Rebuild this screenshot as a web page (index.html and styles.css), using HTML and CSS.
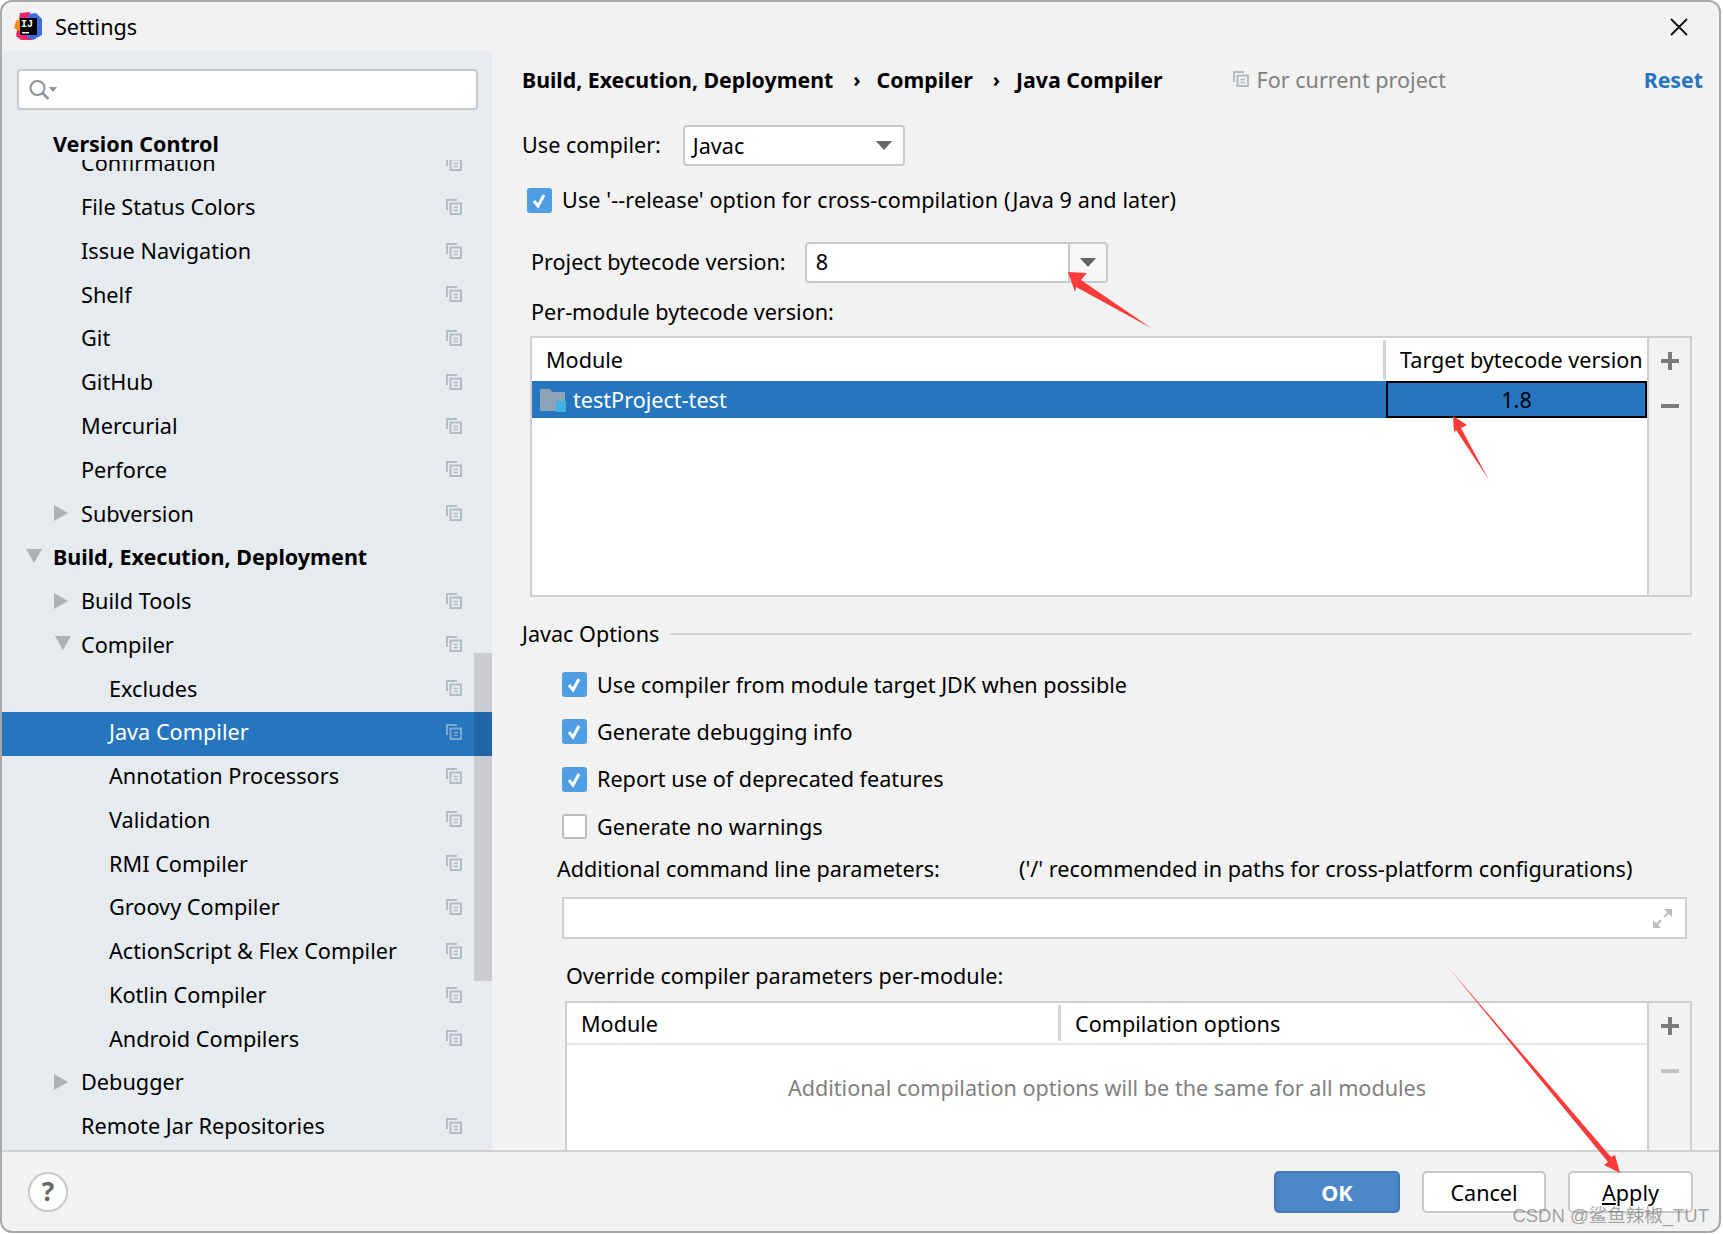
FILE: index.html
```html
<!DOCTYPE html>
<html>
	<head>
		<meta charset="UTF-8">
		<title>Settings</title>
		<link rel="stylesheet" href="styles.css">
	</head>
	<body>
		<svg class="defs" width="0" height="0">
			<symbol id="copy" viewBox="0 0 16 16">
				<path d="M1 11V1h10" fill="none" stroke="currentColor" stroke-width="2"/>
				<rect x="4.5" y="4.5" width="10.5" height="10.5" fill="none" stroke="currentColor" stroke-width="2"/>
				<path d="M7.5 8.5h4.500M7.500 11.500h4.500" stroke="currentColor" stroke-width="1.500"/>
			</symbol>
			<symbol id="check" viewBox="0 0 25 25">
				<rect width="25" height="25" rx="3" fill="#4f9ee3"/>
				<path d="M7 13l4 5 6-11" fill="none" stroke="#fff" stroke-width="3"/>
			</symbol>
		</svg>
		<div class="window">
			<div class="titlebar">
				<svg class="logo" width="29" height="29" viewBox="0 0 29 29">
					<path d="M6 1l10-1 2 28-11 0-5-4z" fill="#e8256f"/>
					<path d="M15 2l7-1 6 6v16l-9 5-6-3z" fill="#3b6fe0"/>
					<path d="M2 9l5-3 1 15-8-5z" fill="#f98a1f"/>
					<rect x="6" y="6" width="17" height="17" fill="#000"/>
					<text x="7" y="15" class="logo-text">IJ</text>
					<rect x="8" y="20" width="7" height="1.500" fill="#fff"/>
				</svg>
				<span class="title">Settings</span>
				<svg class="close" width="18" height="18" viewBox="0 0 18 18">
					<path d="M1 1l16 16M17 1L1 17" stroke="#111" stroke-width="1.800"/>
				</svg>
			</div>
			<div class="content">
				<div class="sidebar">
					<div class="search">
						<svg width="30" height="24" viewBox="0 0 30 24">
							<circle cx="9.500" cy="10" r="7" fill="none" stroke="#8e9499" stroke-width="2"/>
							<path d="M14.500 15l6 6" stroke="#8e9499" stroke-width="2.500"/>
							<path d="M21 9h8l-4 5z" fill="#8e9499"/>
						</svg>
					</div>
					<div class="tree-head">Version Control</div>
					<div class="tree">
						<div class="row lvl2 first">Confirmation<svg class="copy"><use href="#copy"/></svg></div>
						<div class="row lvl2">File Status Colors<svg class="copy"><use href="#copy"/></svg></div>
						<div class="row lvl2">Issue Navigation<svg class="copy"><use href="#copy"/></svg></div>
						<div class="row lvl2">Shelf<svg class="copy"><use href="#copy"/></svg></div>
						<div class="row lvl2">Git<svg class="copy"><use href="#copy"/></svg></div>
						<div class="row lvl2">GitHub<svg class="copy"><use href="#copy"/></svg></div>
						<div class="row lvl2">Mercurial<svg class="copy"><use href="#copy"/></svg></div>
						<div class="row lvl2">Perforce<svg class="copy"><use href="#copy"/></svg></div>
						<div class="row lvl2"><i class="tri tri-right"></i>Subversion<svg class="copy"><use href="#copy"/></svg></div>
						<div class="row lvl1 bold"><i class="tri tri-down"></i>Build, Execution, Deployment</div>
						<div class="row lvl2"><i class="tri tri-right"></i>Build Tools<svg class="copy"><use href="#copy"/></svg></div>
						<div class="row lvl2"><i class="tri tri-down"></i>Compiler<svg class="copy"><use href="#copy"/></svg></div>
						<div class="row lvl3">Excludes<svg class="copy"><use href="#copy"/></svg></div>
						<div class="row lvl3 selected">Java Compiler<svg class="copy"><use href="#copy"/></svg></div>
						<div class="row lvl3">Annotation Processors<svg class="copy"><use href="#copy"/></svg></div>
						<div class="row lvl3">Validation<svg class="copy"><use href="#copy"/></svg></div>
						<div class="row lvl3">RMI Compiler<svg class="copy"><use href="#copy"/></svg></div>
						<div class="row lvl3">Groovy Compiler<svg class="copy"><use href="#copy"/></svg></div>
						<div class="row lvl3">ActionScript &amp; Flex Compiler<svg class="copy"><use href="#copy"/></svg></div>
						<div class="row lvl3">Kotlin Compiler<svg class="copy"><use href="#copy"/></svg></div>
						<div class="row lvl3">Android Compilers<svg class="copy"><use href="#copy"/></svg></div>
						<div class="row lvl2"><i class="tri tri-right"></i>Debugger</div>
						<div class="row lvl2">Remote Jar Repositories<svg class="copy"><use href="#copy"/></svg></div>
					</div>
					<div class="scrollbar"></div>
				</div>
				<div class="main">
					<div class="crumbs">
						<b>Build, Execution, Deployment</b><span class="sep">›</span>
						<b>Compiler</b><span class="sep">›</span>
						<b>Java Compiler</b>
						<span class="scope"><svg class="copy"><use href="#copy"/></svg>For current project</span>
						<b class="reset">Reset</b>
					</div>
					<div class="compiler-row">
						<span class="label">Use compiler:</span>
						<div class="combo combo-compiler"><span class="value">Javac</span><i class="caret"></i></div>
					</div>
					<div class="check-row release">
						<svg class="check"><use href="#check"/></svg>Use '--release' option for cross-compilation (Java 9 and later)
					</div>
					<div class="bytecode-row">
						<span class="label">Project bytecode version:</span>
						<div class="combo combo-bytecode">
							<span class="value">8</span>
							<span class="combo-btn"><i class="caret"></i></span>
						</div>
					</div>
					<div class="per-module">Per-module bytecode version:</div>
					<div class="table table-top">
						<div class="table-body">
							<div class="thead">
								<div class="th th-module">Module</div>
								<div class="th">Target bytecode version</div>
							</div>
							<div class="tr">
								<div class="td-module">
									<svg width="26" height="25" viewBox="0 0 26 25">
										<path d="M0 2h10l2 3h13v19H0z" fill="#8fa3b8"/>
										<rect x="16" y="14" width="10" height="11" fill="#3fb1e3"/>
									</svg>
									testProject-test
								</div>
								<div class="td-target">1.8</div>
							</div>
						</div>
						<div class="tools">
							<span class="plus"></span>
							<span class="minus"></span>
						</div>
					</div>
					<div class="group-head"><span>Javac Options</span><i></i></div>
					<div class="options">
						<div class="check-row"><svg class="check"><use href="#check"/></svg>Use compiler from module target JDK when possible</div>
						<div class="check-row"><svg class="check"><use href="#check"/></svg>Generate debugging info</div>
						<div class="check-row"><svg class="check"><use href="#check"/></svg>Report use of deprecated features</div>
						<div class="check-row"><span class="check empty"></span>Generate no warnings</div>
					</div>
					<div class="params">
						<span class="params-label">Additional command line parameters:</span>
						<span>('/' recommended in paths for cross-platform configurations)</span>
					</div>
					<div class="field">
						<svg width="23" height="23" viewBox="0 0 23 23">
							<path d="M13 2h8v8zM10 21H2v-8z" fill="#b9bec3"/>
							<path d="M18 5l-5 5M5 18l5-5" stroke="#b9bec3" stroke-width="2"/>
						</svg>
					</div>
					<div class="override">Override compiler parameters per-module:</div>
					<div class="table table-bottom">
						<div class="table-body">
							<div class="thead thead-light">
								<div class="th th-module2">Module</div>
								<div class="th">Compilation options</div>
							</div>
							<div class="empty-text">Additional compilation options will be the same for all modules</div>
						</div>
						<div class="tools">
							<span class="plus"></span>
							<span class="minus off"></span>
						</div>
					</div>
				</div>
			</div>
			<div class="footer">
				<span class="help">?</span>
				<div class="btn btn-ok">OK</div>
				<div class="btn btn-cancel">Cancel</div>
				<div class="btn"><u>A</u>pply</div>
			</div>
			<svg class="marks" width="1723" height="1234" viewBox="0 0 1723 1234">
				<path d="M1068 272l19 1-6 7 70 48-75-41-1 5z"/>
				<path d="M1453 416l14 9-6 3 28 52-33-50-2 3z"/>
				<path d="M1448 967l163 190 4-2 5 18-16-8 4-3z"/>
			</svg>
			<div class="watermark">CSDN @鲨鱼辣椒_TUT</div>
		</div>
	</body>
</html>
```

FILE: styles.css
```css
*{margin:0;padding:0;box-sizing:border-box;}
html{height:100%;}
body{
	height:100%;
	background:#fff;
	font-family:"Noto Sans","Noto Sans CJK SC",sans-serif;
	font-size:21.6px;
	color:#000;
	overflow:hidden;
}
b{font-size:21.3px;font-weight:bold;}
.defs{position:absolute;}
.window{
	position:relative;
	display:flex;
	flex-direction:column;
	width:1721px;
	height:1233px;
	background:#f2f2f2;
	border:2px solid #a9a9a9;
	border-radius:12px;
	overflow:hidden;
}
.titlebar{
	display:flex;
	align-items:center;
	flex:none;
	height:49px;
	padding:0 31px 0 12px;
}
.logo-text{font:bold 10px "Liberation Mono",monospace;fill:#fff;}
.title{margin-left:12px;}
.close{margin-left:auto;}
.content{display:flex;flex:none;height:1099px;}

/* sidebar */
.sidebar{
	position:relative;
	display:flex;
	flex-direction:column;
	flex:none;
	width:490px;
	background:#e6ebef;
	padding-top:18px;
}
.search{
	display:flex;
	align-items:center;
	flex:none;
	width:461px;
	height:41px;
	margin-left:15px;
	padding-left:9px;
	background:#fff;
	border:2px solid #c8c9ca;
	border-radius:4px;
}
.tree-head{
	flex:none;
	height:50px;
	padding:19px 0 0 51px;
	line-height:30px;
	font-size:21.5px;
	font-weight:bold;
}
.tree{flex:1;overflow:hidden;font-size:21.7px;}
.row{
	position:relative;
	display:flex;
	align-items:center;
	height:43.77px;
	padding-bottom:4px;
}
.first{margin-top:-17px;}
.lvl1{padding-left:51px;}
.lvl2{padding-left:79px;}
.lvl3{padding-left:107px;}
.bold{font-size:21.5px;font-weight:bold;}
.selected{background:#2675bf;color:#fff;}
.copy{width:16px;height:16px;color:#b3bcc4;flex:none;}
.row .copy{position:absolute;left:444px;top:12px;}
.selected .copy{color:#7ea9d3;}
.tri{position:absolute;width:0;height:0;border-style:solid;border-color:transparent;}
.tri-right{left:52px;top:12px;border-width:8px 0 8px 14px;border-left-color:#aeb1b4;}
.tri-down{left:53px;top:12px;border-width:14px 8px 0 8px;border-top-color:#aeb1b4;}
.lvl1 .tri-down{left:24px;}
.scrollbar{
	position:absolute;
	right:0;
	top:602px;
	width:18px;
	height:328px;
	background:rgba(0,0,0,.13);
}

/* right side */
.main{
	flex:1;
	display:flex;
	flex-direction:column;
	overflow:hidden;
	padding:10px 27px 0 30px;
}
.crumbs{
	display:flex;
	align-items:center;
	flex:none;
	height:40px;
	padding-bottom:4px;
}
.sep{margin:0 16px 0 20px;font-weight:bold;font-size:20px;}
.scope{display:flex;align-items:center;margin-left:71px;color:#808080;}
.scope .copy{margin-right:7px;}
.reset{margin:0 -11px 0 auto;color:#2675bf;}
.label{padding-bottom:3px;}
.compiler-row{
	display:flex;
	align-items:center;
	flex:none;
	height:41px;
	margin-top:24px;
}
.combo{
	display:flex;
	align-items:center;
	height:41px;
	background:#fff;
	border:2px solid #c8c9ca;
	border-radius:4px;
}
.combo-compiler{
	justify-content:space-between;
	width:222px;
	margin-left:22px;
	padding:0 11px 0 8px;
}
.combo-compiler .value{padding-bottom:1px;}
.caret{
	width:0;
	height:0;
	border-style:solid;
	border-width:9px 8px 0 8px;
	border-color:#666 transparent transparent;
}
.value{padding-bottom:3px;}
.check-row{
	display:flex;
	align-items:center;
	height:47.3px;
	padding-bottom:1px;
}
.check{
	flex:none;
	width:25px;
	height:25px;
	margin:1px 10px 0 0;
}
.release{
	height:30px;
	margin:19px 0 0 5px;
	letter-spacing:.09px;
}
.bytecode-row{
	display:flex;
	align-items:center;
	flex:none;
	height:41px;
	margin-top:27px;
	padding-left:9px;
}
.combo-bytecode{width:303px;margin-left:19px;padding-left:9px;}
.combo-bytecode .value{flex:1;}
.combo-btn{
	display:flex;
	align-items:center;
	justify-content:center;
	width:38px;
	height:100%;
	background:#f6f6f6;
	border-left:2px solid #c8c9ca;
	border-radius:0 3px 3px 0;
}
.per-module{
	flex:none;
	height:30px;
	line-height:30px;
	margin-top:14px;
	padding-left:9px;
}
.table{
	display:flex;
	flex:none;
	margin:9px 0 0 8px;
	border:2px solid #cfcfcf;
}
.table-top{height:261px;}
.table-bottom{height:170px;margin:10px 0 0 43px;}
.table-body{flex:1;background:#fff;}
.tools{
	flex:none;
	display:flex;
	flex-direction:column;
	align-items:center;
	width:43px;
	padding-top:14px;
	gap:27px;
	border-left:2px solid #cfcfcf;
}
.plus,.minus{position:relative;display:block;width:18px;height:18px;}
.plus:before,.minus:before{
	content:"";
	position:absolute;
	left:0;
	top:7px;
	width:18px;
	height:4px;
	background:#7a7a7a;
}
.plus:after{
	content:"";
	position:absolute;
	left:7px;
	top:0;
	width:4px;
	height:18px;
	background:#7a7a7a;
}
.minus.off:before{background:#c4c4c4;}
.thead{display:flex;height:43px;}
.thead-light{height:42px;border-bottom:2px solid #e6e6e6;}
.thead-light .th{padding-top:2px;}
.th{display:flex;align-items:center;padding-left:14px;padding-bottom:1px;}
.th-module{width:854px;padding-left:14px;border-right:3px solid #d4d4d4;margin:2px 0;}
.th-module2{width:494px;padding-left:14px;border-right:3px solid #d4d4d4;margin:2px 0;}
.tr{display:flex;height:37px;background:#2675bf;}
.td-module{
	display:flex;
	align-items:center;
	gap:7px;
	width:852px;
	padding-left:8px;
	color:#fff;
}
.td-target{
	flex:1;
	margin-left:2px;
	border:2px solid #000;
	line-height:33px;
	text-align:center;
}
.group-head{
	display:flex;
	align-items:center;
	flex:none;
	height:30px;
	margin-top:22px;
}
.group-head span{padding-bottom:2px;}
.group-head i{flex:1;height:2px;margin-left:11px;background:#d4d4d4;}
.options{flex:none;margin-top:12px;padding-left:40px;}
.empty{background:#fff;border:2px solid #bdbdbd;border-radius:3px;}
.params{
	display:flex;
	flex:none;
	height:30px;
	line-height:32px;
	margin-top:3px;
	padding-left:35px;
}
.params-label{width:462px;}
.field{
	display:flex;
	align-items:center;
	justify-content:flex-end;
	flex:none;
	height:42px;
	margin:14px 5px 0 40px;
	padding-right:11px;
	background:#fff;
	border:2px solid #cfcfcf;
}
.override{
	flex:none;
	height:30px;
	line-height:30px;
	margin-top:22px;
	padding-left:44px;
}
.empty-text{
	margin-top:28px;
	line-height:30px;
	text-align:center;
	color:#808080;
}

/* footer */
.footer{
	display:flex;
	align-items:center;
	flex:1;
	gap:22px;
	padding:0 26px 0 26px;
	border-top:2px solid #d1d1d1;
}
.help{
	width:40px;
	height:40px;
	margin-right:auto;
	background:#fff;
	border:2px solid #c8c8c8;
	border-radius:50%;
	text-align:center;
	font-size:26px;
	line-height:34px;
	font-weight:bold;
	color:#666;
}
.btn{
	width:125px;
	height:42px;
	background:#fff;
	border:2px solid #c8c9ca;
	border-radius:5px;
	text-align:center;
	line-height:40px;
}
.btn-ok{
	width:126px;
	background:#4c87c8;
	border-color:#3f78b5;
	color:#fff;
	font-weight:bold;
}
.btn-cancel{width:124px;}
.marks{position:absolute;left:-2px;top:-2px;fill:#fc3a3a;pointer-events:none;}
.watermark{
	position:absolute;
	right:10px;
	bottom:4px;
	font-family:"Liberation Sans","Noto Sans CJK SC",sans-serif;
	font-size:18.5px;
	color:rgba(90,90,90,.55);
}
```
